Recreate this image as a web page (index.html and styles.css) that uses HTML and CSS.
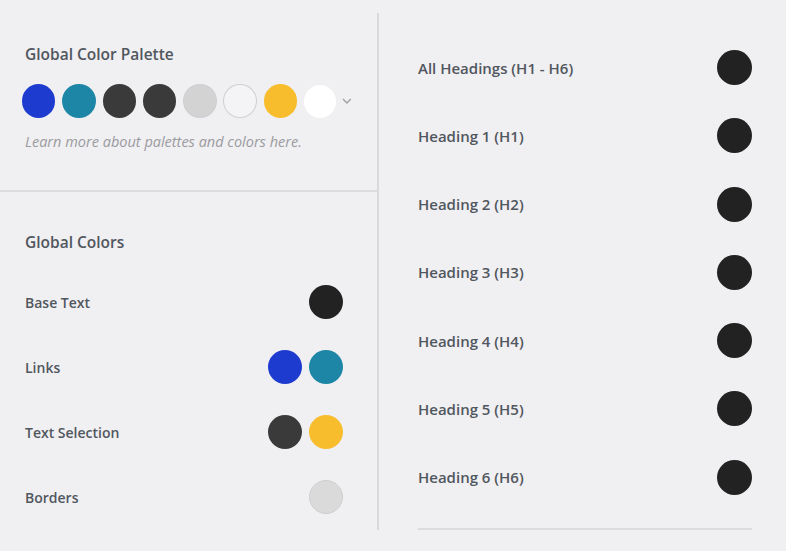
FILE: index.html
```html
<!DOCTYPE html>
<html lang="en">
<head>
    <meta charset="UTF-8">
    <meta name="viewport" content="width=device-width, initial-scale=1.0">
    <title>Global Colors</title>
    <link rel="stylesheet" href="styles.css">
</head>
<body>
    <div class="panel">
        <div class="left">
            <div class="section palette-section">
                <h2>Global Color Palette</h2>
                <div class="palette">
                    <span class="swatch" style="background:#1d3bcf"></span>
                    <span class="swatch" style="background:#1d86a6"></span>
                    <span class="swatch" style="background:#3a3a3a"></span>
                    <span class="swatch" style="background:#3a3a3a"></span>
                    <span class="swatch light" style="background:#d3d3d4"></span>
                    <span class="swatch light" style="background:#f4f4f6"></span>
                    <span class="swatch" style="background:#f7bd2d"></span>
                    <span class="swatch white" style="background:#ffffff"></span>
                    <svg class="chevron" width="10" height="6" viewBox="0 0 10 6"><path d="M1 1l4 4 4-4" fill="none" stroke="#a0a0a5" stroke-width="1.4"/></svg>
                </div>
                <p class="hint">Learn more about palettes and colors here.</p>
            </div>

            <div class="section colors-section">
                <h2>Global Colors</h2>
                <div class="row">
                    <span class="label">Base Text</span>
                    <div class="dots"><span class="swatch" style="background:#222222"></span></div>
                </div>
                <div class="row">
                    <span class="label">Links</span>
                    <div class="dots">
                        <span class="swatch" style="background:#1d3bcf"></span>
                        <span class="swatch" style="background:#1d86a6"></span>
                    </div>
                </div>
                <div class="row">
                    <span class="label">Text Selection</span>
                    <div class="dots">
                        <span class="swatch" style="background:#3a3a3a"></span>
                        <span class="swatch" style="background:#f7bd2d"></span>
                    </div>
                </div>
                <div class="row">
                    <span class="label">Borders</span>
                    <div class="dots"><span class="swatch light" style="background:#dadada"></span></div>
                </div>
            </div>
        </div>

        <div class="divider"></div>

        <div class="right">
            <div class="row big">
                <span class="label">All Headings (H1 - H6)</span>
                <span class="swatch" style="background:#222222"></span>
            </div>
            <div class="row big">
                <span class="label">Heading 1 (H1)</span>
                <span class="swatch" style="background:#222222"></span>
            </div>
            <div class="row big">
                <span class="label">Heading 2 (H2)</span>
                <span class="swatch" style="background:#222222"></span>
            </div>
            <div class="row big">
                <span class="label">Heading 3 (H3)</span>
                <span class="swatch" style="background:#222222"></span>
            </div>
            <div class="row big">
                <span class="label">Heading 4 (H4)</span>
                <span class="swatch" style="background:#222222"></span>
            </div>
            <div class="row big">
                <span class="label">Heading 5 (H5)</span>
                <span class="swatch" style="background:#222222"></span>
            </div>
            <div class="row big">
                <span class="label">Heading 6 (H6)</span>
                <span class="swatch" style="background:#222222"></span>
            </div>
            <div class="rule"></div>
        </div>
    </div>
</body>
</html>
```

FILE: styles.css
```css
/* General Styles */
body {
    font-family: 'Open Sans', 'Noto Sans', sans-serif;
    margin: 0;
    padding: 0;
    background-color: #f0eff2;
    color: #50575e;
}

h2 {
    margin: 0;
    font-size: 15.5px;
    line-height: 20px;
    font-weight: 600;
    color: #50575e;
}

/* Layout */
.panel {
    display: flex;
    height: 551px;
}

.left {
    width: 377px;
}

.divider {
    width: 2px;
    margin-top: 13px;
    height: 517px;
    background-color: #d9d9dc;
    margin-right: 1px;
}

.right {
    flex: 1;
    padding: 50px 34px 0 38px;
}

/* Palette */
.section {
    padding: 0 25px;
}

.palette-section {
    padding-top: 44px;
    padding-bottom: 38px;
    border-bottom: 2px solid #dcdcdf;
}

.palette {
    display: flex;
    align-items: center;
    gap: 6.8px;
    margin: 20px 0 0 -3px;
}

.swatch {
    display: block;
    width: 34px;
    height: 34px;
    border-radius: 50%;
    box-sizing: border-box;
}

.swatch.light {
    border: 1px solid #cfcfd2;
}

.swatch.white {
    width: 33px;
    height: 33px;
}

.chevron {
    margin-left: -1px;
}

.hint {
    margin: 14px 0 0;
    font-size: 14.5px;
    line-height: 20px;
    font-style: italic;
    color: #9a9ba0;
}

/* Global colors */
.colors-section {
    padding-top: 40px;
}

.colors-section h2 {
    margin-bottom: 33px;
}

.row {
    display: flex;
    align-items: center;
    justify-content: space-between;
    height: 34px;
    margin-bottom: 31px;
    padding-right: 9px;
}

.label {
    font-size: 14px;
    font-weight: 600;
    color: #50575e;
}

.dots {
    display: flex;
    gap: 7px;
}

/* Headings column */
.row.big {
    height: 35px;
    margin-bottom: 33.3px;
    padding-right: 0;
}

.row.big .label {
    font-size: 15px;
}

.row.big .swatch {
    width: 35px;
    height: 35px;
}

.rule {
    height: 2px;
    background-color: #dcdcdf;
}
```
